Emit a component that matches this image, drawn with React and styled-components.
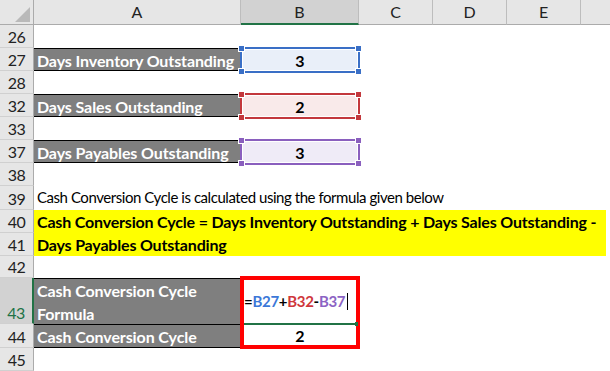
import styled, { createGlobalStyle } from "styled-components";

const GREEN = "#217346";
const FONT = `Lato, "Liberation Sans", sans-serif`;

const TONES = {
  blue: { line: "#3a6fc6", fill: "#e9eff9", text: "#3c78d8" },
  red: { line: "#c3383d", fill: "#f9eaea", text: "#cf373c" },
  purple: { line: "#8a5fbe", fill: "#efebf7", text: "#8c63c4" },
};

const ROW_HEIGHTS = [25, 23, 23, 23, 23, 23, 23, 23, 24, 23, 23, 22, 46, 24, 23];

const GlobalStyle = createGlobalStyle`
  html, body {
    margin: 0;
    padding: 0;
    background: #ffffff;
  }
  body {
    overflow: hidden;
  }
`;

const Sheet = styled.div`
  display: grid;
  grid-template-columns: 34px 207px 118px 74px 74px 74px 1fr;
  grid-template-rows: ${ROW_HEIGHTS.map((h) => `${h}px`).join(" ")};
  width: 610px;
  height: 371px;
  overflow: hidden;
  font-family: ${FONT};
  font-size: 16px;
  line-height: 23px;
  color: #000;
`;

const Corner = styled.div`
  display: flex;
  align-items: flex-end;
  justify-content: flex-end;
  padding: 0 3px 2px 0;
  background: #e6e6e6;
  border-right: 1px solid #ababab;
  border-bottom: 1px solid #ababab;
`;

const ColHeader = styled.div`
  display: flex;
  align-items: center;
  justify-content: center;
  background: ${(p) => (p.$active ? "#d2d2d2" : "#e6e6e6")};
  border-right: ${(p) => (p.$last ? "none" : "1px solid #bdbdbd")};
  border-bottom: ${(p) => (p.$active ? `2px solid ${GREEN}` : "1px solid #ababab")};
  color: #222;
  font-size: 16px;
  line-height: 20px;
`;

const RowHeader = styled.div`
  display: flex;
  align-items: flex-end;
  justify-content: center;
  background: ${(p) => (p.$active ? "#d2d2d2" : "#e6e6e6")};
  border-bottom: 1px solid #d0d0d0;
  border-right: ${(p) => (p.$active ? `2px solid ${GREEN}` : "1px solid #ababab")};
  color: ${(p) => (p.$active ? GREEN : "#222")};
  font-size: 16px;
  letter-spacing: -0.5px;
  line-height: 21px;
`;

const Blank = styled.div`
  grid-column: ${(p) => p.$from || 2} / -1;
`;

const TextCell = styled.div`
  grid-column: 2 / -1;
  padding: 0 3px;
  white-space: nowrap;
  font-size: 15px;
  letter-spacing: -0.45px;
`;

const LabelCell = styled.div`
  padding: 0 3px;
  background: #7f7f7f;
  color: #fff;
  font-weight: 700;
  letter-spacing: -0.1px;
  white-space: nowrap;
  border-top: 1px solid #000;
  border-bottom: ${(p) => (p.$closed ? "1px solid #000" : "none")};
`;

const ValueCell = styled.div`
  position: relative;
  padding-top: 1px;
  background: ${(p) => p.$fill || "#fff"};
  text-align: center;
  font-weight: 700;
`;

const RangeBox = styled.div`
  position: absolute;
  top: -1px;
  left: -1px;
  right: -1px;
  bottom: -2px;
  border: 2px solid ${(p) => p.$line};
  box-shadow: inset 0 0 0 1px #fff;
`;

const Handle = styled.span`
  position: absolute;
  width: 5px;
  height: 5px;
  background: ${(p) => p.$line};
  box-shadow: 0 0 0 1px #fff;
  ${(p) => (p.$top ? "top: -3px;" : "bottom: -3px;")}
  ${(p) => (p.$left ? "left: -3px;" : "right: -3px;")}
`;

const HighlightBlock = styled.div`
  grid-column: 2 / -1;
  grid-row: span 2;
  width: 566px;
  padding: 0 3px;
  background: #ffff00;
  font-weight: 700;
  letter-spacing: -0.18px;
  white-space: nowrap;
`;

const FormulaCell = styled.div`
  position: relative;
  display: flex;
  align-items: center;
  padding: 1px 0 0 3px;
  font-size: 15px;
  font-weight: 700;
  letter-spacing: -0.3px;
  white-space: nowrap;
`;

const Ref = styled.span`
  color: ${(p) => p.$color || "#000"};
`;

const Caret = styled.span`
  display: inline-block;
  width: 1px;
  height: 17px;
  margin-left: 2px;
  background: #000;
`;

const CalloutBox = styled.div`
  position: absolute;
  top: -2px;
  left: -1px;
  right: -1px;
  bottom: -25px;
  border: 4px solid #ff0000;
  z-index: 2;
`;

const ActiveEdge = styled.div`
  position: absolute;
  left: 3px;
  right: 3px;
  bottom: -1px;
  height: 2px;
  background: ${GREEN};
  z-index: 3;

  &::after {
    content: "";
    position: absolute;
    right: -2px;
    top: -1px;
    width: 3px;
    height: 4px;
    background: ${GREEN};
  }
`;

const ResultCell = styled.div`
  text-align: center;
  font-weight: 700;
`;

const columns = ["A", "B", "C", "D", "E", ""];

const inputs = [
  { row: 26 },
  { row: 27, label: "Days Inventory Outstanding", value: "3", tone: "blue" },
  { row: 28 },
  { row: 32, label: "Days Sales Outstanding", value: "2", tone: "red" },
  { row: 33 },
  { row: 37, label: "Days Payables Outstanding", value: "3", tone: "purple" },
  { row: 38 },
];

const InputRow = ({ row, label, value, tone }) => {
  if (!label) {
    return (
      <>
        <RowHeader>{row}</RowHeader>
        <Blank />
      </>
    );
  }
  const t = TONES[tone];
  return (
    <>
      <RowHeader>{row}</RowHeader>
      <LabelCell $closed>{label}</LabelCell>
      <ValueCell $fill={t.fill}>
        {value}
        <RangeBox $line={t.line}>
          <Handle $line={t.line} $top $left />
          <Handle $line={t.line} $top />
          <Handle $line={t.line} $left />
          <Handle $line={t.line} />
        </RangeBox>
      </ValueCell>
      <Blank $from={4} />
    </>
  );
};

export default function App() {
  return (
    <>
      <GlobalStyle />
      <Sheet>
        <Corner>
          <svg width="15" height="15" viewBox="0 0 15 15">
            <polygon points="0,15 15,15 15,0" fill="#b9b9b9" />
          </svg>
        </Corner>
        {columns.map((c, i) => (
          <ColHeader key={i} $active={c === "B"} $last={i === columns.length - 1}>
            {c}
          </ColHeader>
        ))}

        {inputs.map((r) => (
          <InputRow key={r.row} {...r} />
        ))}

        <RowHeader>39</RowHeader>
        <TextCell>Cash Conversion Cycle is calculated using the formula given below</TextCell>

        <RowHeader>40</RowHeader>
        <HighlightBlock>
          Cash Conversion Cycle = Days Inventory Outstanding + Days Sales Outstanding -
          <br />
          Days Payables Outstanding
        </HighlightBlock>
        <RowHeader>41</RowHeader>

        <RowHeader>42</RowHeader>
        <Blank />

        <RowHeader $active>43</RowHeader>
        <LabelCell>
          Cash Conversion Cycle
          <br />
          Formula
        </LabelCell>
        <FormulaCell>
          <Ref>=</Ref>
          <Ref $color={TONES.blue.text}>B27</Ref>
          <Ref>+</Ref>
          <Ref $color={TONES.red.text}>B32</Ref>
          <Ref>-</Ref>
          <Ref $color={TONES.purple.text}>B37</Ref>
          <Caret />
          <CalloutBox />
          <ActiveEdge />
        </FormulaCell>
        <Blank $from={4} />

        <RowHeader>44</RowHeader>
        <LabelCell $closed>Cash Conversion Cycle</LabelCell>
        <ResultCell>2</ResultCell>
        <Blank $from={4} />

        <RowHeader>45</RowHeader>
        <Blank />
      </Sheet>
    </>
  );
}
